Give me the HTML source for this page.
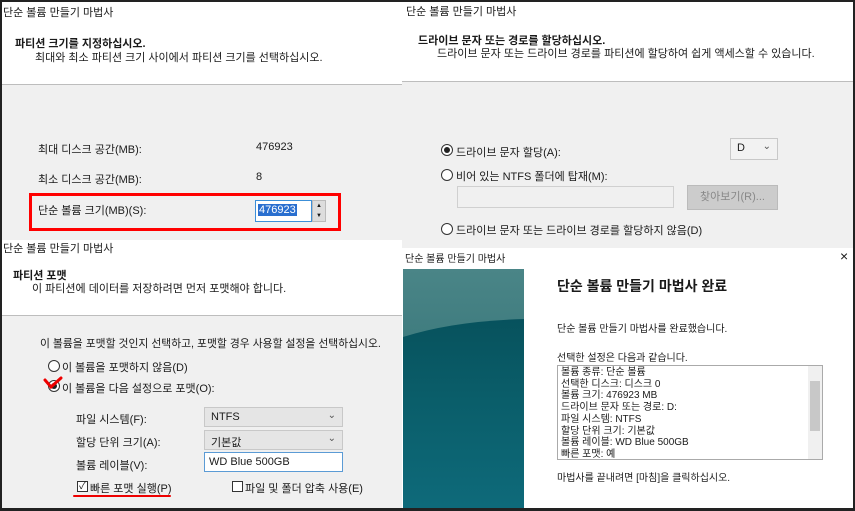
<!DOCTYPE html>
<html><head><meta charset="utf-8">
<style>
*{margin:0;padding:0;box-sizing:border-box}
html{overflow:hidden;width:855px;height:511px}
body{width:855px;height:511px;position:relative;overflow:hidden;background:#f0f0f0;font-family:"Liberation Sans","Noto Sans CJK KR","NanumGothic",sans-serif;font-size:11px;color:#1a1a1a}
.a{position:absolute;white-space:nowrap}
.b{font-weight:bold}
.w{background:#fff}
.rad{position:absolute;width:12px;height:12px;border:1px solid #333;border-radius:50%;background:#fff}
.sel{position:absolute;background:#e5e5e5;border:1px solid #c8c8c8;padding:3px 6px;font-size:11px}
.chev{position:absolute;right:6px;top:2px;color:#555;font-size:10px}
</style></head><body>
<div class="a" style="left:0;top:0;width:855px;height:511px;border:2px solid #222;border-bottom-width:3px;z-index:10;pointer-events:none"></div>

<div class="a w" style="left:0;top:0;width:402px;height:85px;border-bottom:1px solid #bdbdbd"></div>
<div class="a" style="left:3px;top:4px">단순 볼륨 만들기 마법사</div>
<div class="a b" style="left:15px;top:35px">파티션 크기를 지정하십시오.</div>
<div class="a" style="left:35px;top:49px">최대와 최소 파티션 크기 사이에서 파티션 크기를 선택하십시오.</div>
<div class="a" style="left:38px;top:141px">최대 디스크 공간(MB):</div>
<div class="a" style="left:256px;top:141px">476923</div>
<div class="a" style="left:38px;top:171px">최소 디스크 공간(MB):</div>
<div class="a" style="left:256px;top:171px">8</div>
<div class="a" style="left:29px;top:193px;width:312px;height:38px;border:3px solid #f00"></div>
<div class="a" style="left:38px;top:202px">단순 볼륨 크기(MB)(S):</div>
<div class="a w" style="left:255px;top:200px;width:57px;height:22px;border:1px solid #3c8fd8"></div>
<div class="a" style="left:258px;top:204px;background:#2a6fcf;color:#fff;padding:0 1px">476923</div>
<div class="a" style="left:312px;top:200px;width:14px;height:22px;background:#ddd;border:1px solid #bbb;font-size:6px;text-align:center;line-height:10px">▲<br>▼</div>

<div class="a w" style="left:402px;top:0;width:453px;height:82px;border-bottom:1px solid #bdbdbd"></div>
<div class="a" style="left:406px;top:3px">단순 볼륨 만들기 마법사</div>
<div class="a b" style="left:418px;top:32px">드라이브 문자 또는 경로를 할당하십시오.</div>
<div class="a" style="left:437px;top:45px">드라이브 문자 또는 드라이브 경로를 파티션에 할당하여 쉽게 액세스할 수 있습니다.</div>
<div class="rad" style="left:441px;top:144px"></div><div class="a" style="left:444px;top:147px;width:6px;height:6px;border-radius:50%;background:#222"></div>
<div class="a" style="left:456px;top:144px">드라이브 문자 할당(A):</div>
<div class="sel" style="left:730px;top:138px;width:48px;height:22px;background:#f2f2f2">D<span class="chev">⌄</span></div>
<div class="rad" style="left:441px;top:169px"></div>
<div class="a" style="left:456px;top:168px">비어 있는 NTFS 폴더에 탑재(M):</div>
<div class="a" style="left:457px;top:186px;width:217px;height:22px;border:1px solid #d0d0d0;background:#f0f0f0"></div>
<div class="a" style="left:687px;top:185px;width:91px;height:25px;background:#ccc;border:1px solid #bbb;color:#888;text-align:center;line-height:23px">찾아보기(R)...</div>
<div class="rad" style="left:441px;top:223px"></div>
<div class="a" style="left:456px;top:222px">드라이브 문자 또는 드라이브 경로를 할당하지 않음(D)</div>

<div class="a w" style="left:0;top:240px;width:402px;height:76px;border-bottom:1px solid #bdbdbd"></div>
<div class="a" style="left:3px;top:240px">단순 볼륨 만들기 마법사</div>
<div class="a b" style="left:13px;top:267px">파티션 포맷</div>
<div class="a" style="left:32px;top:280px">이 파티션에 데이터를 저장하려면 먼저 포맷해야 합니다.</div>
<div class="a" style="left:40px;top:335px;font-size:10.8px">이 볼륨을 포맷할 것인지 선택하고, 포맷할 경우 사용할 설정을 선택하십시오.</div>
<div class="rad" style="left:48px;top:360px"></div>
<div class="a" style="left:62px;top:359px">이 볼륨을 포맷하지 않음(D)</div>
<div class="rad" style="left:48px;top:380px"></div><div class="a" style="left:51px;top:383px;width:6px;height:6px;border-radius:50%;background:#222"></div>
<svg class="a" style="left:43px;top:376px" width="22" height="14"><path d="M2 4 L8 11 L18 2" stroke="#e00" stroke-width="3" fill="none" stroke-linecap="round"/></svg>
<div class="a" style="left:62px;top:380px">이 볼륨을 다음 설정으로 포맷(O):</div>
<div class="a" style="left:76px;top:411px">파일 시스템(F):</div>
<div class="sel" style="left:204px;top:407px;width:139px;height:20px">NTFS<span class="chev">⌄</span></div>
<div class="a" style="left:76px;top:434px">할당 단위 크기(A):</div>
<div class="sel" style="left:204px;top:430px;width:139px;height:20px">기본값<span class="chev">⌄</span></div>
<div class="a" style="left:76px;top:457px">볼륨 레이블(V):</div>
<div class="a w" style="left:204px;top:452px;width:139px;height:20px;border:1px solid #5b9bd5;padding:3px 4px">WD Blue 500GB</div>
<div class="a w" style="left:77px;top:481px;width:11px;height:11px;border:1px solid #333;font-size:10px;line-height:9px;text-align:center">✓</div>
<div class="a" style="left:90px;top:480px">빠른 포맷 실행(P)</div>
<div class="a" style="left:73px;top:495px;width:98px;height:2px;background:#e00;border-radius:1px"></div>
<div class="a w" style="left:232px;top:481px;width:11px;height:11px;border:1px solid #333"></div>
<div class="a" style="left:245px;top:480px">파일 및 폴더 압축 사용(E)</div>

<div class="a w" style="left:402px;top:248px;width:453px;height:260px"></div>
<div class="a" style="left:405px;top:250px;font-size:10px">단순 볼륨 만들기 마법사</div>
<div class="a" style="left:840px;top:248px;font-size:14px">×</div>
<svg class="a" style="left:403px;top:269px" width="121" height="239" viewBox="0 0 121 239">
<defs>
<linearGradient id="g1" x1="0" y1="0" x2="0" y2="1"><stop offset="0" stop-color="#4a8587"/><stop offset="1" stop-color="#25676c"/></linearGradient>
<linearGradient id="g2" x1="0" y1="0" x2="0" y2="1"><stop offset="0" stop-color="#07525d"/><stop offset="0.4" stop-color="#0a5d69"/><stop offset="1" stop-color="#0e6a7a"/></linearGradient>
</defs>
<rect width="121" height="239" fill="url(#g1)"/>
<path d="M0 68 Q50 52 121 50 L121 239 L0 239 Z" fill="url(#g2)"/>
</svg>
<div class="a b" style="left:557px;top:276px;font-size:14px">단순 볼륨 만들기 마법사 완료</div>
<div class="a" style="left:557px;top:320px;font-size:10px">단순 볼륨 만들기 마법사를 완료했습니다.</div>
<div class="a" style="left:557px;top:349px;font-size:10px">선택한 설정은 다음과 같습니다.</div>
<div class="a w" style="left:557px;top:365px;width:266px;height:95px;border:1px solid #aaa;overflow:hidden;font-size:10px;line-height:11.7px;padding:1px 3px">
볼륨 종류: 단순 볼륨<br>선택한 디스크: 디스크 0<br>볼륨 크기: 476923 MB<br>드라이브 문자 또는 경로: D:<br>파일 시스템: NTFS<br>할당 단위 크기: 기본값<br>볼륨 레이블: WD Blue 500GB<br>빠른 포맷: 예
<div style="position:absolute;right:0;top:0;width:14px;height:93px;background:#f0f0f0"><div style="position:absolute;left:2px;top:15px;width:10px;height:50px;background:#c8c8c8"></div></div>
</div>
<div class="a" style="left:557px;top:469px;font-size:10px">마법사를 끝내려면 [마침]을 클릭하십시오.</div>
</body></html>
